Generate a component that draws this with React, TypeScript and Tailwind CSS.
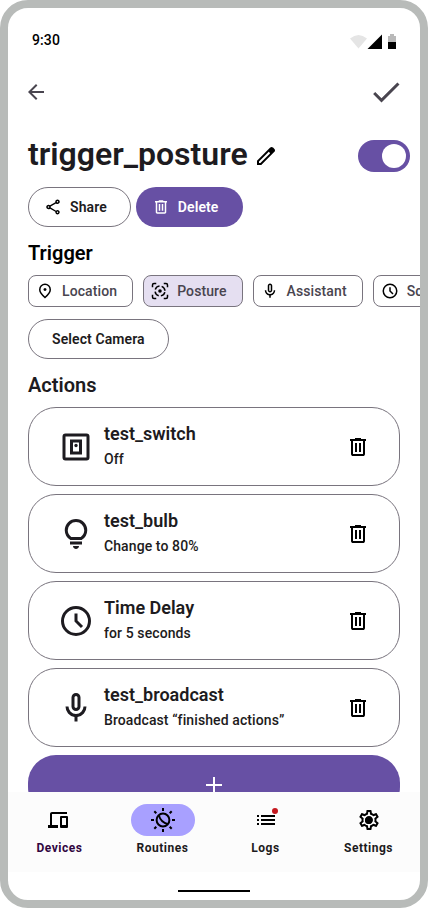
import { useState, type ReactNode } from "react";
import { MdArrowBack, MdCheck, MdList, MdOutlineSettings, MdOutlineShare } from "react-icons/md";

type IconProps = { className?: string };

function Icon({ className, children }: IconProps & { children: ReactNode }) {
  return (
    <svg viewBox="0 0 24 24" fill="currentColor" aria-hidden="true" className={className}>
      {children}
    </svg>
  );
}

function EditIcon({ className }: IconProps) {
  return (
    <Icon className={className}>
      <path d="M5 19h1.425L16.2 9.225 14.775 7.8 5 17.575V19Zm-2 2v-4.25L16.2 3.575q.3-.275.663-.425T17.625 3q.4 0 .775.15t.65.45L20.425 5q.3.275.438.65T21 6.4q0 .4-.138.763t-.437.662L7.25 21H3Z" />
    </Icon>
  );
}

function TrashIcon({ className }: IconProps) {
  return (
    <Icon className={className}>
      <path d="M7 21q-.825 0-1.412-.587T5 19V6H4V4h5V3h6v1h5v2h-1v13q0 .825-.587 1.413T17 21H7ZM17 6H7v13h10V6ZM9 17h2V8H9v9Zm4 0h2V8h-2v9Z" />
    </Icon>
  );
}

function PinIcon({ className }: IconProps) {
  return (
    <Icon className={className}>
      <path d="M12 12q.825 0 1.413-.587T14 10q0-.825-.587-1.412T12 8q-.825 0-1.412.588T10 10q0 .825.588 1.413T12 12Zm0 7.35q3.05-2.8 4.525-5.088T18 10.2q0-2.725-1.738-4.462T12 4Q9.475 4 7.738 5.738T6 10.2q0 1.775 1.475 4.063T12 19.35ZM12 22q-4.025-3.425-6.012-6.362T4 10.2q0-3.75 2.413-5.975T12 2q3.175 0 5.588 2.225T20 10.2q0 2.5-1.988 5.438T12 22Z" />
    </Icon>
  );
}

function PostureIcon({ className }: IconProps) {
  return (
    <Icon className={className}>
      <g fill="none" stroke="currentColor" strokeWidth="2">
        <path d="M2 7V4q0-2 2-2h3M17 2h3q2 0 2 2v3M22 17v3q0 2-2 2h-3M7 22H4q-2 0-2-2v-3" />
        <circle cx="12" cy="12" r="6.6" strokeDasharray="7.4 2.967" strokeDashoffset="-1.5" />
      </g>
      <circle cx="12" cy="12" r="2.4" />
    </Icon>
  );
}

function MicIcon({ className }: IconProps) {
  return (
    <Icon className={className}>
      <path d="M12 14q-1.25 0-2.125-.875T9 11V5q0-1.25.875-2.125T12 2q1.25 0 2.125.875T15 5v6q0 1.25-.875 2.125T12 14Zm-1 7v-3.075q-2.6-.35-4.3-2.325T5 11h2q0 2.075 1.463 3.537T12 16q2.075 0 3.537-1.463T17 11h2q0 2.625-1.7 4.6T13 17.925V21h-2Zm1-9q.425 0 .713-.288T13 11V5q0-.425-.287-.713T12 4q-.425 0-.713.287T11 5v6q0 .425.287.712T12 12Z" />
    </Icon>
  );
}

function ClockIcon({ className }: IconProps) {
  return (
    <Icon className={className}>
      <path d="m15.3 16.7 1.4-1.4-3.7-3.7V7h-2v5.4l4.3 4.3ZM12 22a10 10 0 1 1 0-20 10 10 0 0 1 0 20Zm0-2a8 8 0 1 0 0-16 8 8 0 0 0 0 16Z" />
    </Icon>
  );
}

function SwitchIcon({ className }: IconProps) {
  return (
    <Icon className={className}>
      <path
        fillRule="evenodd"
        d="M5 3h14q2 0 2 2v14q0 2-2 2H5q-2 0-2-2V5q0-2 2-2Zm0 2v14h14V5H5Zm3 2h8v10H8V7Zm2 2v6h4V9h-4Z"
      />
      <circle cx="12" cy="11" r="1.1" />
    </Icon>
  );
}

function BulbIcon({ className }: IconProps) {
  return (
    <Icon className={className}>
      <path d="M12 22q-.825 0-1.412-.587T10 20h4q0 .825-.587 1.413T12 22Zm-4-3v-2h8v2H8Zm.25-3q-1.725-1.025-2.738-2.75T4.5 9.5q0-3.125 2.188-5.312T12 2q3.125 0 5.313 2.188T19.5 9.5q0 2.025-1.012 3.75T15.75 16h-7.5Zm.6-2h6.3q1.125-.8 1.738-1.975T17.5 9.5q0-2.3-1.6-3.9T12 4Q9.7 4 8.1 5.6T6.5 9.5q0 1.35.613 2.525T8.85 14Z" />
    </Icon>
  );
}

function DevicesIcon({ className }: IconProps) {
  return (
    <Icon className={className}>
      <path
        fillRule="evenodd"
        d="M0 20v-3h2V6q0-.8.6-1.4T4 4h15v2H4v11h6v3H0Zm13 0q-1 0-1-1V9q0-1 1-1h6q1 0 1 1v10q0 1-1 1h-6Zm1-3h4v-7h-4v7Z"
      />
    </Icon>
  );
}

function RoutinesIcon({ className }: IconProps) {
  return (
    <Icon className={className}>
      <g fill="none" stroke="currentColor" strokeWidth="2">
        <circle cx="12" cy="12" r="6.4" />
        <path strokeWidth="1.8" d="M8 7.500q1.500 6.500 9 8.700" />
        <path d="M12 0v3M12 21v3M0 12h3M21 12h3M3.300 3.300l2 2M18.700 18.700l2 2M3.300 20.700l2-2M18.700 5.300l2-2" />
      </g>
    </Icon>
  );
}

function LogsIcon({ className }: IconProps) {
  return (
    <span className="relative block">
      <MdList className={className} />
      <span className="absolute top-0 right-0 size-[6px] rounded-full bg-[#c5191f]" />
    </span>
  );
}

function SettingsIcon({ className }: IconProps) {
  return (
    <span className="relative block">
      <MdOutlineSettings className={className} />
      <span className="absolute inset-0 m-auto size-[7px] rounded-full bg-black" />
    </span>
  );
}

const triggers = [
  { name: "Location", icon: PinIcon },
  { name: "Posture", icon: PostureIcon },
  { name: "Assistant", icon: MicIcon },
  { name: "Schedule", icon: ClockIcon },
];

const actions = [
  { name: "test_switch", detail: "Off", icon: SwitchIcon },
  { name: "test_bulb", detail: "Change to 80%", icon: BulbIcon },
  { name: "Time Delay", detail: "for 5 seconds", icon: ClockIcon },
  { name: "test_broadcast", detail: "Broadcast “finished actions”", icon: MicIcon },
];

const tabs = [
  { name: "Devices", icon: DevicesIcon, color: "text-[#31063f]" },
  { name: "Routines", icon: RoutinesIcon, color: "text-[#1d1b20]" },
  { name: "Logs", icon: LogsIcon, color: "text-[#1d1b20]" },
  { name: "Settings", icon: SettingsIcon, color: "text-[#1d1b20]" },
];

function StatusBar() {
  return (
    <div className="flex h-[52px] shrink-0 items-end justify-between px-6 pb-[10px]">
      <span className="text-sm leading-5 font-medium tracking-[0.1px] text-black">9:30</span>
      <svg viewBox="0 0 46 16" className="h-4 w-[46px]" aria-hidden="true">
        <path d="M0 4.500Q8.500-2.500 17 4.500L8.500 14.500Z" fill="#e5e5e5" />
        <path d="M17.500 15L32 .5V15Z" fill="#000" />
        <path d="M38 2h2V0h4v2h2v6h-8Z" fill="#b9b9b9" />
        <path d="M38 8h8v7h-8Z" fill="#000" />
      </svg>
    </div>
  );
}

export default function App() {
  const [enabled, setEnabled] = useState(true);
  const [trigger, setTrigger] = useState("Posture");

  return (
    <div className="flex h-screen flex-col overflow-hidden rounded-[28px] border-8 border-[#b8bbb9] bg-white font-['Roboto',sans-serif] text-[#1d1b20]">
      <StatusBar />
      <header className="flex h-16 shrink-0 items-center justify-between px-4">
        <button type="button" aria-label="Back" className="text-[#49454f]">
          <MdArrowBack className="size-6" />
        </button>
        <button type="button" aria-label="Save" className="text-[#49454f]">
          <MdCheck className="size-9" />
        </button>
      </header>

      <main className="flex-1 overflow-x-hidden overflow-y-auto pt-3 pl-5 [scrollbar-width:none]">
        <div className="flex h-10 items-center justify-between pr-[10px]">
          <div className="flex items-center gap-[6px]">
            <h1 className="pb-1 text-[32px] leading-9 font-semibold">trigger_posture</h1>
            <button type="button" aria-label="Rename" className="text-black">
              <EditIcon className="size-6" />
            </button>
          </div>
          <label className="flex h-8 w-[52px] cursor-pointer items-center rounded-full bg-[#6750a4] px-1 has-checked:justify-end">
            <input
              type="checkbox"
              role="switch"
              aria-label="Enabled"
              checked={enabled}
              onChange={(e) => setEnabled(e.target.checked)}
              className="size-6 appearance-none rounded-full bg-white"
            />
          </label>
        </div>

        <div className="mt-[11px] flex gap-[5px]">
          <button type="button" className="flex h-10 items-center gap-2 rounded-full border border-[#79747e] pr-[23px] pl-[15px] text-sm font-semibold tracking-[0.1px]">
            <MdOutlineShare className="size-[18px] text-black" />
            Share
          </button>
          <button type="button" className="flex h-10 items-center gap-2 rounded-full bg-[#6750a4] pr-6 pl-4 text-sm font-semibold tracking-[0.1px] text-white">
            <TrashIcon className="size-[18px]" />
            Delete
          </button>
        </div>

        <h2 className="mt-3 text-xl leading-7 font-semibold text-black">Trigger</h2>
        <div className="mt-2 flex gap-[10px] overflow-x-auto [scrollbar-width:none]">
          {triggers.map(({ name, icon: Glyph }) => (
            <button
              key={name}
              type="button"
              aria-pressed={trigger === name}
              onClick={() => setTrigger(name)}
              className="flex h-8 shrink-0 items-center gap-2 rounded-lg border border-[#79747e] pr-[15px] pl-[7px] text-sm font-medium tracking-[0.1px] text-[#49454f] aria-pressed:bg-[#e5dff1]"
            >
              <Glyph className="size-[18px] text-black" />
              {name}
            </button>
          ))}
        </div>
        <button type="button" className="mt-3 flex h-10 items-center rounded-full border border-[#79747e] px-[23px] text-sm font-semibold tracking-[0.1px]">
          Select Camera
        </button>

        <h2 className="mt-3 text-xl leading-7 font-semibold">Actions</h2>
        <ul className="mt-2 flex flex-col gap-2 pr-5">
          {actions.map(({ name, detail, icon: Glyph }) => (
            <li key={name} className="flex h-[79px] items-center rounded-[28px] border border-[#79747e] px-[29px]">
              <Glyph className="size-9 shrink-0" />
              <div className="ml-[10px] flex-1">
                <h3 className="text-lg leading-6 font-semibold">{name}</h3>
                <p className="text-sm leading-[26px] font-medium tracking-[0.1px]">{detail}</p>
              </div>
              <button type="button" aria-label={`Remove ${name}`} className="text-black">
                <TrashIcon className="size-6" />
              </button>
            </li>
          ))}
        </ul>
        <div className="mt-2 pr-5 pb-5">
          <button type="button" aria-label="Add action" className="flex h-[60px] w-full items-center justify-center rounded-[28px] bg-[#6750a4] text-white">
            <Icon className="size-6">
              <path d="M11 4h2v7h7v2h-7v7h-2v-7H4v-2h7Z" />
            </Icon>
          </button>
        </div>
      </main>

      <nav className="grid h-20 shrink-0 grid-cols-4 bg-[#fcfcfc]">
        {tabs.map(({ name, icon: Glyph, color }) => (
          <a key={name} href={`#${name}`} aria-current={name === "Routines" ? "page" : undefined} className="group flex flex-col items-center gap-1 pt-3">
            <span className="flex h-8 w-16 items-center justify-center rounded-full text-black group-aria-[current=page]:bg-[#a8a0ff]">
              <Glyph className="size-6" />
            </span>
            <span className={`text-xs leading-4 font-bold tracking-[0.5px] ${color}`}>{name}</span>
          </a>
        ))}
      </nav>
      <div className="flex h-7 shrink-0 justify-center pt-[18px]">
        <div className="h-[2px] w-[72px] bg-black" />
      </div>
    </div>
  );
}
